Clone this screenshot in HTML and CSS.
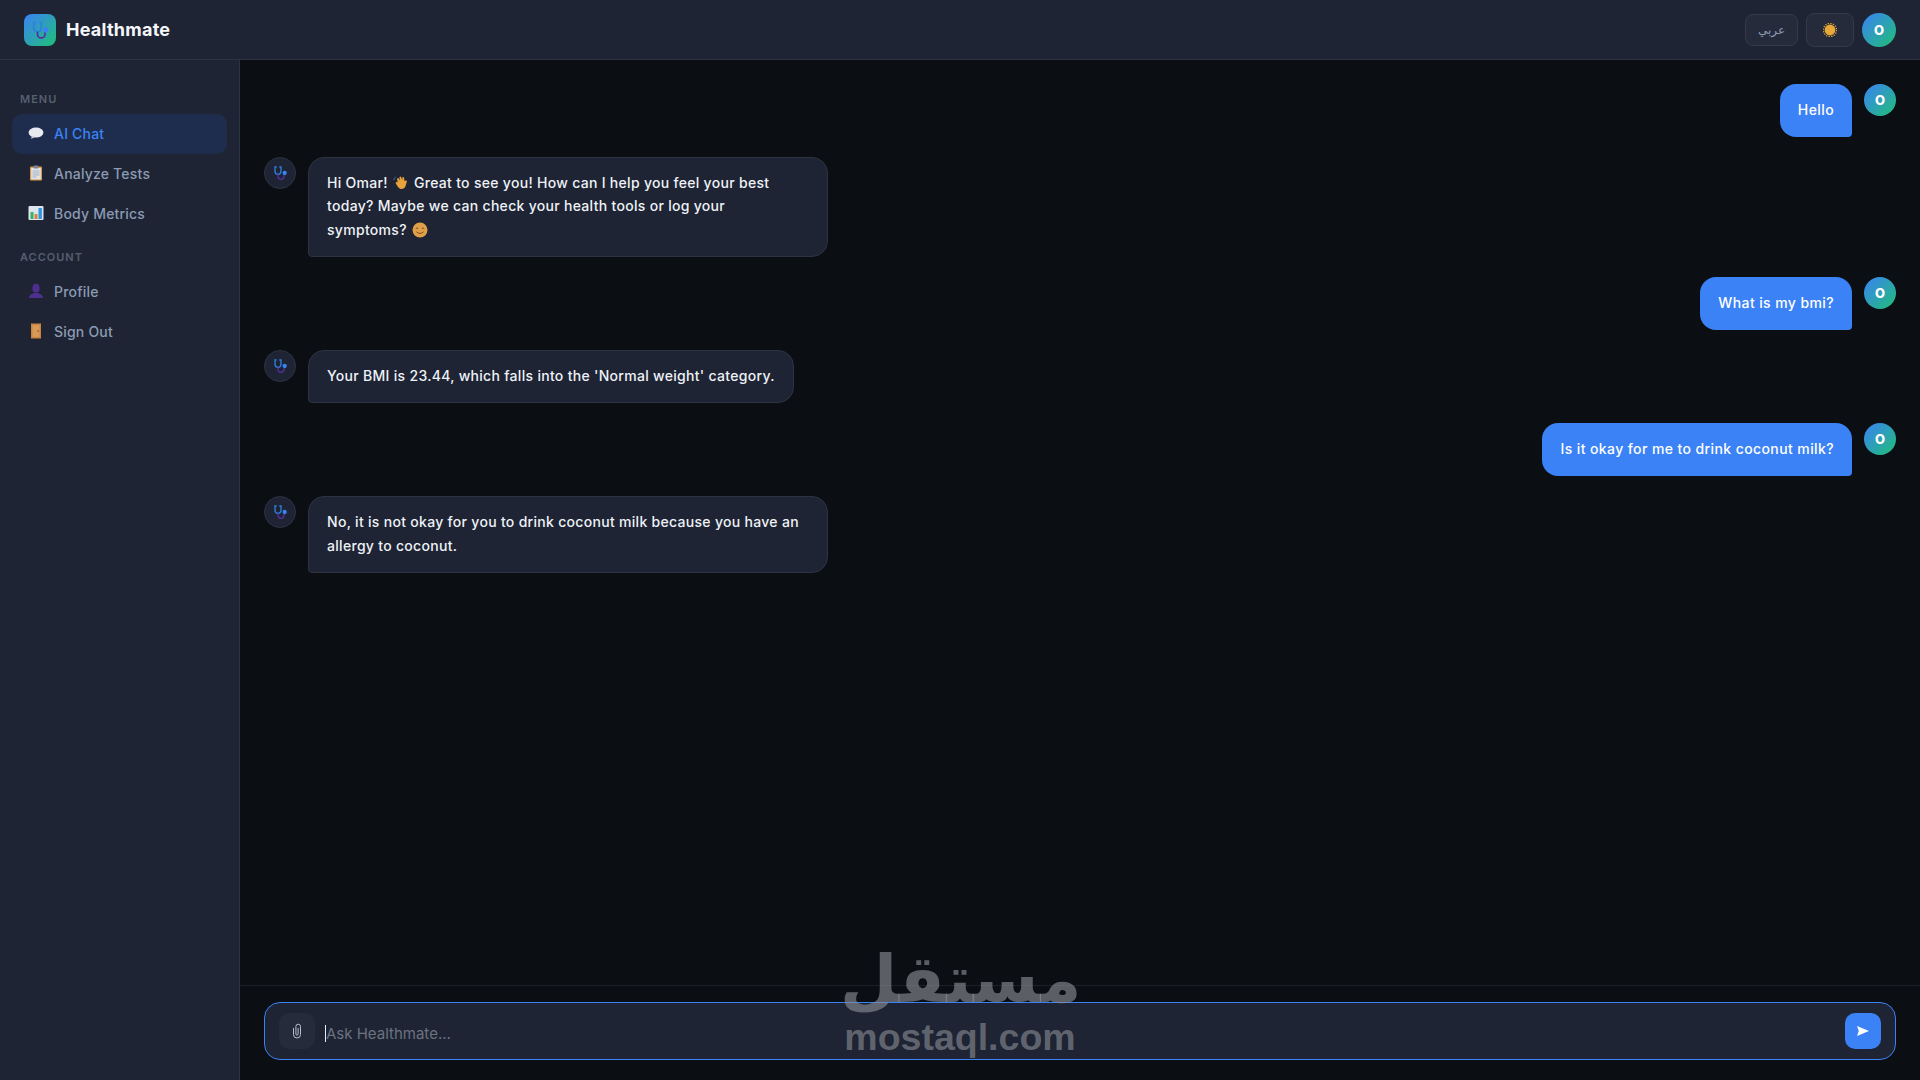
FILE: index.html
```html
<!DOCTYPE html>
<html>
    <head>
        <title>Healthmate</title>
        <link rel="stylesheet" href="styles.css">
    </head>
    <body>
        <svg class="defs" width="0" height="0">
            <symbol id="steth" viewBox="0 0 24 24">
                <path d="M7 3H4.500v6.500a4.500 4.500 0 0 0 9 0V3H11" fill="none" stroke="#2f7fe0" stroke-width="2"/>
                <path d="M9 14v3a4.500 4.500 0 0 0 9 0v-3" fill="none" stroke="#54309f" stroke-width="2"/>
                <circle cx="19" cy="12" r="3.200" fill="#3b82f6"/>
            </symbol>
        </svg>
        <header class="topbar">
            <div class="brand">
                <div class="brand-logo"><svg width="20" height="20"><use href="#steth"/></svg></div>
                <span class="brand-name">Healthmate</span>
            </div>
            <div class="top-actions">
                <button class="btn-lang">عربي</button>
                <button class="btn-theme">
                    <svg width="14" height="14" viewBox="0 0 14 14"><circle cx="7" cy="7" r="5.400" fill="#e8a93a"/><circle cx="7" cy="7" r="6.600" fill="none" stroke="#e8a93a" stroke-width="1.200" stroke-dasharray="1.300 1.300"/></svg>
                </button>
                <div class="avatar avatar-top">O</div>
            </div>
        </header>
        <div class="layout">
            <nav class="sidebar">
                <div class="nav-label">MENU</div>
                <a class="nav-item active">
                    <svg class="nav-icon" viewBox="0 0 16 16"><ellipse cx="8" cy="7.600" rx="7.400" ry="5" fill="#e8eaf0"/><path d="M4 11l-1 3 4-2z" fill="#c9ccd6"/></svg>
                    AI Chat
                </a>
                <a class="nav-item">
                    <svg class="nav-icon" viewBox="0 0 16 16"><rect x="2" y="1.500" width="12" height="14" rx="1" fill="#d99a4e"/><rect x="3.200" y="3" width="9.600" height="11.400" fill="#dfe3ea"/><rect x="5.500" y=".5" width="5" height="3" rx=".8" fill="#7c8494"/><path d="M4.500 6h7M4.500 8h7M4.500 10h7M4.500 12h4" stroke="#9aa3b2" stroke-width=".8"/></svg>
                    Analyze Tests
                </a>
                <a class="nav-item">
                    <svg class="nav-icon" viewBox="0 0 16 16"><rect x=".5" y="1" width="15" height="14" rx="1" fill="#dfe5ec"/><rect x="2.500" y="7" width="3" height="7" fill="#34b36b"/><rect x="6.500" y="9" width="3" height="5" fill="#d8853b"/><rect x="10.500" y="3" width="3.400" height="11" fill="#2f95dc"/></svg>
                    Body Metrics
                </a>
                <div class="nav-label nav-label-2">ACCOUNT</div>
                <a class="nav-item">
                    <svg class="nav-icon" viewBox="0 0 16 16"><ellipse cx="8" cy="5.200" rx="3.600" ry="4.400" fill="#4c2f8f"/><path d="M.8 15c.6-3.600 3.600-5 7.200-5s6.600 1.400 7.200 5z" fill="#4c2f8f"/></svg>
                    Profile
                </a>
                <a class="nav-item">
                    <svg class="nav-icon" viewBox="0 0 16 16"><rect x="3" y=".5" width="10" height="15" fill="#c98442"/><rect x="4.500" y="2" width="7" height="12" fill="#d99a55"/><circle cx="10" cy="8" r=".8" fill="#7a4a20"/></svg>
                    Sign Out
                </a>
            </nav>
            <main class="chat">
                <div class="messages">
                    <div class="msg msg-user">
                        <div class="bubble">Hello</div>
                        <div class="avatar">O</div>
                    </div>
                    <div class="msg msg-bot">
                        <div class="bot-avatar"><svg width="16" height="16"><use href="#steth"/></svg></div>
                        <div class="bubble bubble-wide">
                            <div>Hi Omar! <svg class="emoji" viewBox="0 0 16 16"><path d="M2.500 8l1.200-1.200 1 .8L4 3.500l1.400-.5 1.300 2.500L6.500 2l1.500-.5 1.200 3.500.3-3 1.500.2.500 4 1.300-1 1.200.8-1 3.500c-.6 3.500-3 5-5.500 4.500C6 13.500 4.500 11.500 2.500 8z" fill="#e8a23c"/><path d="M.8 5c.2-1.500.8-2.400 1.800-3" stroke="#3f6fb5" fill="none"/></svg> Great to see you! How can I help you feel your best</div>
                            <div>today? Maybe we can check your health tools or log your</div>
                            <div>symptoms? <svg class="emoji" viewBox="0 0 16 16"><circle cx="8" cy="8" r="7.500" fill="#e0a04a"/><path d="M3.800 6.500q1.200-1.200 2.400 0M9.800 6.500q1.200-1.200 2.400 0M4.500 9.800q3.500 3.200 7 0" stroke="#7a4f1d" fill="none"/></svg></div>
                        </div>
                    </div>
                    <div class="msg msg-user">
                        <div class="bubble">What is my bmi?</div>
                        <div class="avatar">O</div>
                    </div>
                    <div class="msg msg-bot">
                        <div class="bot-avatar"><svg width="16" height="16"><use href="#steth"/></svg></div>
                        <div class="bubble">Your BMI is 23.44, which falls into the 'Normal weight' category.</div>
                    </div>
                    <div class="msg msg-user">
                        <div class="bubble">Is it okay for me to drink coconut milk?</div>
                        <div class="avatar">O</div>
                    </div>
                    <div class="msg msg-bot">
                        <div class="bot-avatar"><svg width="16" height="16"><use href="#steth"/></svg></div>
                        <div class="bubble">No, it is not okay for you to drink coconut milk because you have an allergy to coconut.</div>
                    </div>
                </div>
                <div class="composer-wrap">
                    <div class="composer">
                        <button class="btn-attach">
                            <svg width="12" height="16" viewBox="0 0 12 16"><path d="M2.500 5v6.500a3.500 3.500 0 0 0 7 0V3.500a2.300 2.300 0 0 0-4.600 0V11a1.100 1.100 0 0 0 2.200 0V5" fill="none" stroke="#b9bfca" stroke-width="1"/></svg>
                        </button>
                        <div class="composer-text"><span class="caret"></span>Ask Healthmate...</div>
                        <button class="btn-send">
                            <svg width="12" height="10" viewBox="0 0 12 10"><path d="M0 0l12 5-12 5 1.800-5z" fill="#fff"/></svg>
                        </button>
                    </div>
                </div>
            </main>
        </div>
        <div class="watermark">
            <div class="wm-ar">مستقل</div>
            <div class="wm-en">mostaql.com</div>
        </div>
    </body>
</html>
```
FILE: styles.css
```css
*{
    margin: 0;
    box-sizing: border-box;
}
html, body{
    height: 100%;
}
body{
    background-color: #0b0f14;
    color: #eef2f8;
    font-family: Inter, "Noto Sans", sans-serif;
    font-size: 14px;
    overflow: hidden;
}
button{
    font-family: inherit;
    cursor: pointer;
}
.defs{
    position: absolute;
}
.topbar{
    height: 60px;
    background-color: #1e2433;
    border-bottom: 1px solid #2d3342;
    display: flex;
    align-items: center;
    justify-content: space-between;
    padding: 0 24px;
}
.brand{
    display: flex;
    align-items: center;
    gap: 10px;
}
.brand-logo{
    width: 32px;
    height: 32px;
    border-radius: 8px;
    background: linear-gradient(135deg, #3b82f6, #1fbf75);
    display: flex;
    align-items: center;
    justify-content: center;
}
.brand-name{
    font-size: 18px;
    font-weight: 700;
    letter-spacing: 0.25px;
    color: #f4f6fa;
}
.top-actions{
    display: flex;
    align-items: center;
    gap: 8px;
}
.btn-lang{
    width: 53px;
    height: 32px;
    border-radius: 8px;
    background-color: #252b3a;
    border: 1px solid #343a49;
    color: #8b9bb4;
    font-size: 12px;
    font-family: "Noto Sans", "DejaVu Sans", sans-serif;
}
.btn-theme{
    width: 48px;
    height: 34px;
    border-radius: 8px;
    background-color: #252b3a;
    border: 1px solid #343a49;
    display: flex;
    align-items: center;
    justify-content: center;
}
.avatar{
    width: 32px;
    height: 32px;
    flex-shrink: 0;
    border-radius: 50%;
    background: linear-gradient(135deg, #3b82f6, #1fbf75);
    color: #fff;
    font-size: 13px;
    font-weight: 800;
    display: flex;
    align-items: center;
    justify-content: center;
}
.avatar-top{
    width: 34px;
    height: 34px;
}
.layout{
    display: flex;
    height: 1020px;
}
.sidebar{
    width: 240px;
    flex-shrink: 0;
    background-color: #1e2433;
    border-right: 1px solid #2d3342;
    padding: 32px 12px 0;
}
.nav-label{
    font-size: 11px;
    font-weight: 600;
    letter-spacing: 1px;
    color: #565f70;
    padding: 0 8px;
    height: 14px;
    line-height: 14px;
    margin-bottom: 8px;
}
.nav-label-2{
    margin-top: 16px;
}
.nav-item{
    display: flex;
    align-items: center;
    gap: 10px;
    height: 40px;
    padding: 0 16px 2px;
    border-radius: 10px;
    color: #8b9bb4;
    font-weight: 500;
    letter-spacing: 0.2px;
}
.nav-item.active{
    background-color: #1e2d4d;
    color: #3b82f6;
}
.nav-icon{
    width: 16px;
    height: 16px;
    flex-shrink: 0;
}
.chat{
    flex: 1;
    display: flex;
    flex-direction: column;
    min-width: 0;
}
.messages{
    flex: 1;
    padding: 24px;
    display: flex;
    flex-direction: column;
    gap: 20px;
}
.msg{
    display: flex;
    align-items: flex-start;
    gap: 12px;
}
.msg-user{
    justify-content: flex-end;
}
.bubble{
    padding: 14px 18px 16px;
    line-height: 23.2px;
    border-radius: 16px;
    max-width: 520px;
    font-weight: 500;
}
.bubble-wide{
    width: 520px;
}
.bubble-wide > div{
    height: 23.2px;
    white-space: nowrap;
}
.msg-user .bubble{
    background-color: #3b82f6;
    color: #fff;
    letter-spacing: 0.4px;
    border-bottom-right-radius: 4px;
}
.msg-bot .bubble{
    background-color: #1e2433;
    border: 1px solid #2d3342;
    padding: 13px 18px 15px;
    letter-spacing: 0.3px;
    border-bottom-left-radius: 4px;
}
.bot-avatar{
    width: 32px;
    height: 32px;
    flex-shrink: 0;
    border-radius: 50%;
    background-color: #1e2433;
    border: 1px solid #2d3342;
    display: flex;
    align-items: center;
    justify-content: center;
}
.emoji{
    width: 16px;
    height: 16px;
    vertical-align: -3px;
    margin: 0 1px;
}
.composer-wrap{
    border-top: 1px solid #1c2028;
    padding: 16px 24px 20px;
}
.composer{
    height: 58px;
    background-color: #1e2433;
    border: 1px solid #3b82f6;
    border-radius: 16px;
    display: flex;
    align-items: center;
    padding: 0 14px;
    gap: 10px;
}
.btn-attach{
    width: 36px;
    height: 36px;
    border-radius: 10px;
    background-color: #252b3a;
    border: none;
    display: flex;
    align-items: center;
    justify-content: center;
}
.composer-text{
    flex: 1;
    color: #6b7280;
    font-size: 15px;
    padding-top: 4px;
}
.caret{
    display: inline-block;
    width: 1px;
    height: 17px;
    background-color: #e8edf5;
    vertical-align: -3px;
}
.btn-send{
    width: 36px;
    height: 36px;
    border-radius: 10px;
    background-color: #3b82f6;
    border: none;
    display: flex;
    align-items: center;
    justify-content: center;
}
.watermark{
    position: absolute;
    left: 840px;
    top: 945px;
    width: 240px;
    text-align: center;
    color: rgba(140, 143, 150, 0.62);
    font-family: "Liberation Sans", sans-serif;
    font-weight: 700;
    pointer-events: none;
}
.wm-ar{
    font-family: "DejaVu Sans", sans-serif;
    font-size: 66px;
    line-height: 70px;
}
.wm-en{
    font-size: 37.5px;
    line-height: 44px;
}
```
